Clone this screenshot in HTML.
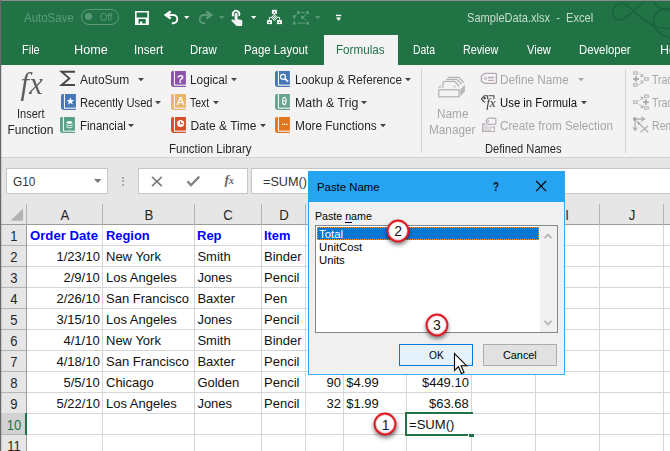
<!DOCTYPE html>
<html><head><meta charset="utf-8"><title>Excel</title>
<style>
html,body{margin:0;padding:0;}
body{width:670px;height:451px;position:relative;overflow:hidden;background:#fff;font-family:"Liberation Sans",sans-serif;}
.b{position:absolute;display:block;}
.g{will-change:opacity}
.t{position:absolute;white-space:pre;line-height:20px;font-family:"Liberation Sans",sans-serif;}
</style></head><body>
<div class="b" style="left:0px;top:0px;width:670px;height:65px;background:#217346;"></div>
<div class="b" style="left:0px;top:65px;width:670px;height:92px;background:#f3f3f3;"></div>
<div class="b" style="left:0px;top:157px;width:670px;height:1px;background:#d2d2d2;"></div>
<div class="b" style="left:0px;top:158px;width:670px;height:67px;background:#e6e6e6;"></div>
<span class="t g" style="top:7.57px;font-size:12.5px;color:#5c9a7a;transform:scaleX(0.9185);transform-origin:0 50%;left:24.20px;">AutoSave</span>
<div class="b" style="left:81px;top:9.200px;width:37.500px;height:15.800px;border:1px solid #5c9a7a;border-radius:8px;box-sizing:border-box"></div>
<div class="b" style="left:85.300px;top:13.300px;width:7px;height:7px;border-radius:4px;background:#58987a"></div>
<span class="t g" style="top:7.42px;font-size:11.5px;color:#5c9a7a;transform:scaleX(0.8125);transform-origin:0 50%;left:100.20px;">Off</span>
<svg class="b" style="left:135.2px;top:11px;" width="14" height="14" viewBox="0 0 14 14"><path fill="#fff" fill-rule="evenodd" d="M0 0h13.900v13.900H0z M1.600 1.500v4.900h10.700V1.500z M3.500 8.100v4.300h1.500v-1.900h2.300v1.900h3.400V8.100z"/></svg>
<svg class="b" style="left:163px;top:10px;" width="15" height="15" viewBox="0 0 15 15"><g ><path d="M.7 5L7 .6 8.400 2.500 4.800 5 8.400 7.500 7 9.400z" fill="#fff"/><path d="M3 5h7.200a4.100 4.100 0 0 1 0 8.200H8.800" fill="none" stroke="#fff" stroke-width="1.900"/></g></svg>
<svg class="b" style="left:199.3px;top:10px;" width="15" height="15" viewBox="0 0 15 15"><g transform="translate(15,0) scale(-1,1)"><path d="M.7 5L7 .6 8.400 2.500 4.800 5 8.400 7.500 7 9.400z" fill="#5c9a7a"/><path d="M3 5h7.200a4.100 4.100 0 0 1 0 8.200H8.800" fill="none" stroke="#5c9a7a" stroke-width="1.900"/></g></svg>
<svg class="b" style="left:182.9px;top:14.850000000000001px;" width="7.4" height="4.9" viewBox="0 0 7.4 4.9"><path d="M1 1h5.4l-2.7 2.9000000000000004z" fill="#fff"/></svg>
<svg class="b" style="left:218.20000000000002px;top:14.850000000000001px;" width="7.4" height="4.9" viewBox="0 0 7.4 4.9"><path d="M1 1h5.4l-2.7 2.9000000000000004z" fill="#5c9a7a"/></svg>
<svg class="b" style="left:230px;top:8px;" width="15" height="19" viewBox="0 0 15 19"><path d="M3.500 8.200A3.300 3.300 0 1 1 8.900 7.800" fill="none" stroke="#fff" stroke-width="1.700"/><path d="M4.600 6.300a1.500 1.500 0 0 1 3 0V11.200l3.300 .6c1 .2 1.600 .9 1.500 1.900l-.4 4.200H6.600L1.600 12.900c-.8-.9 .4-2 1.400-1.300l1.600 1.100z" fill="#f4f4f4"/></svg>
<svg class="b" style="left:249.8px;top:14.95px;" width="7.4" height="4.9" viewBox="0 0 7.4 4.9"><path d="M1 1h5.4l-2.7 2.9000000000000004z" fill="#fff"/></svg>
<svg class="b" style="left:266px;top:9px;" width="17" height="16" viewBox="0 0 17 16"><g fill="none" stroke="#fff" stroke-width=".9"><path d="M3.400 11.200V8.400h10.200v2.800M8.400 4.800v2"/></g><g fill="#fff"><rect x="5.900" y=".8" width="5" height="4.100"/><rect x="1" y="11.100" width="5" height="4"/><rect x="10.900" y="11.100" width="5" height="4"/><path d="M8.400 4.900l3.500 3.500-3.500 3.500-3.500-3.500z"/></g><g fill="#217346"><path d="M7.300 3.700l1.100-1.500 1.100 1.500z"/><path d="M2.400 14l1.100-1.500 1.100 1.500z"/><path d="M12.300 14l1.100-1.500 1.100 1.500z"/><rect x="5.85" y="7.95" width=".9" height=".9"/><rect x="6.90" y="6.90" width=".9" height=".9"/><rect x="6.90" y="9.00" width=".9" height=".9"/><rect x="7.95" y="5.85" width=".9" height=".9"/><rect x="7.95" y="7.95" width=".9" height=".9"/><rect x="7.95" y="10.05" width=".9" height=".9"/><rect x="9.00" y="6.90" width=".9" height=".9"/><rect x="9.00" y="9.00" width=".9" height=".9"/><rect x="10.05" y="7.95" width=".9" height=".9"/></g></svg>
<svg class="b" style="left:292px;top:9px;" width="18" height="17" viewBox="0 0 18 17"><rect x="5.10" y="2.10" width="2.800" height="2.800" fill="#5c9a7a"/><rect x="14.10" y="2.10" width="2.800" height="2.800" fill="#5c9a7a"/><rect x="0.90" y="6.10" width="2.800" height="2.800" fill="#5c9a7a"/><rect x="9.00" y="7.00" width="2.800" height="2.800" fill="#5c9a7a"/><rect x="0.90" y="12.80" width="2.800" height="2.800" fill="#5c9a7a"/><rect x="14.10" y="12.80" width="2.800" height="2.800" fill="#5c9a7a"/><g fill="none" stroke="#5c9a7a" stroke-width="1"><path d="M9.200 3.500h3.600M5.600 4.500L3.200 6.600M2.300 9.800v1.600M5.300 14.200h8M11.500 8l3-3.500M11.500 9l2.600 2.600"/></g></svg>
<svg class="b" style="left:313.8px;top:14.850000000000001px;" width="7.4" height="4.9" viewBox="0 0 7.4 4.9"><path d="M1 1h5.4l-2.7 2.9000000000000004z" fill="#5c9a7a"/></svg>
<svg class="b" style="left:335px;top:13px;" width="8" height="10" viewBox="0 0 8 10"><rect x="1" y="1.700" width="5.200" height="1.400" fill="#fff"/><path d="M1 4.400h5.200l-2.600 3.600z" fill="#fff"/></svg>
<span class="t g" style="top:8.17px;font-size:12.5px;color:#c9ddd1;transform:scaleX(0.8860);transform-origin:0 50%;left:467.10px;">SampleData.xlsx  -  Excel</span>
<svg class="b" style="left:600px;top:0px;" width="70" height="65" viewBox="0 0 70 65"><g fill="none" stroke="#1a623a" stroke-width="1.500"><path d="M44.500 1C38 6 30 16 22 19.500C16 21 12 16 13 11C14 5 19 2.500 23 3.500C30 5.500 36 14 45 20.500C52 26 60 29 70 28.500"/><path d="M70 8.500C62 8 54 12 53.500 20C53 28 60 35 70 38.500"/><path d="M54 0C54 5 60 10 70 10.500"/></g></svg>
<div class="b" style="left:324px;top:35px;width:74px;height:30px;background:#f3f3f3;"></div>
<span class="t g" style="top:40.07px;font-size:12.5px;color:#ffffff;transform:scaleX(0.8800);transform-origin:0 50%;left:21.50px;">File</span>
<span class="t g" style="top:40.07px;font-size:12.5px;color:#ffffff;transform:scaleX(1.0121);transform-origin:0 50%;left:73.60px;">Home</span>
<span class="t g" style="top:40.07px;font-size:12.5px;color:#ffffff;transform:scaleX(0.9313);transform-origin:0 50%;left:133.60px;">Insert</span>
<span class="t g" style="top:40.07px;font-size:12.5px;color:#ffffff;transform:scaleX(0.9133);transform-origin:0 50%;left:190.10px;">Draw</span>
<span class="t g" style="top:40.07px;font-size:12.5px;color:#ffffff;transform:scaleX(0.9113);transform-origin:0 50%;left:244.30px;">Page Layout</span>
<span class="t g" style="top:40.07px;font-size:12.5px;color:#217346;transform:scaleX(0.9321);transform-origin:0 50%;left:335.90px;">Formulas</span>
<span class="t g" style="top:40.07px;font-size:12.5px;color:#ffffff;transform:scaleX(0.8296);transform-origin:0 50%;left:412.90px;">Data</span>
<span class="t g" style="top:40.07px;font-size:12.5px;color:#ffffff;transform:scaleX(0.8595);transform-origin:0 50%;left:463.40px;">Review</span>
<span class="t g" style="top:40.07px;font-size:12.5px;color:#ffffff;transform:scaleX(0.8857);transform-origin:0 50%;left:527.20px;">View</span>
<span class="t g" style="top:40.07px;font-size:12.5px;color:#ffffff;transform:scaleX(0.9052);transform-origin:0 50%;left:579.40px;">Developer</span>
<span class="t g" style="top:40.07px;font-size:12.5px;color:#ffffff;left:660.00px;">Help</span>
<span class="t g" style="left:20.500px;top:64.300px;font-family:'Liberation Serif',serif;font-style:italic;font-size:30.500px;line-height:40px;color:#5e5e5e;letter-spacing:.4px">fx</span>
<span class="t g" style="top:103.84px;font-size:12px;color:#262626;transform:scaleX(0.9161);transform-origin:0 50%;left:16.70px;">Insert</span>
<span class="t g" style="top:120.04px;font-size:12px;color:#262626;left:7.40px;">Function</span>
<svg class="b" style="left:59px;top:70px;" width="18" height="17" viewBox="0 0 18 17"><path d="M16 1.750H2.600L10.300 8.400 2.600 15.050H16" fill="none" stroke="#464646" stroke-width="1.900" stroke-linejoin="miter"/></svg>
<span class="t g" style="top:69.74px;font-size:12px;color:#262626;transform:scaleX(0.9959);transform-origin:0 50%;left:79.60px;">AutoSum</span>
<svg class="b" style="left:137.4px;top:77.0px;" width="8" height="5" viewBox="0 0 8 5"><path d="M1 1h6L4 4.200z" fill="#444"/></svg>
<svg class="b" style="left:61.2px;top:94px;" width="15" height="16" viewBox="0 0 15 16"><path d="M2.900 0H1.600Q0 0 0 1.600V13.600Q0 15.900 2.400 15.900H14.900V14.800H2.900z" fill="#4577b9"/><rect x="4" y="0" width="10.900" height="13.600" fill="#4577b9"/><path d="M9.40 3.20L10.40 5.92L13.30 6.03L11.02 7.83L11.81 10.62L9.40 9.00L6.99 10.62L7.78 7.83L5.50 6.03L8.40 5.92z" fill="#fff"/></svg>
<span class="t g" style="top:92.94px;font-size:12px;color:#262626;transform:scaleX(0.9295);transform-origin:0 50%;left:79.60px;">Recently Used</span>
<svg class="b" style="left:153.8px;top:100.0px;" width="8" height="5" viewBox="0 0 8 5"><path d="M1 1h6L4 4.200z" fill="#444"/></svg>
<svg class="b" style="left:60.1px;top:116.8px;" width="15" height="16" viewBox="0 0 15 16"><path d="M2.900 0H1.600Q0 0 0 1.600V13.600Q0 15.900 2.400 15.900H14.900V14.800H2.900z" fill="#5a9f88"/><rect x="4" y="0" width="10.900" height="13.600" fill="#5a9f88"/><ellipse cx="9.400" cy="5.600" rx="3" ry="1.250" fill="#fff"/><g fill="none" stroke="#fff" stroke-width="1"><path d="M6.400 7.400c0 1.700 6 1.700 6 0M6.400 9.500c0 1.700 6 1.700 6 0M6.400 11.600c0 .4"/></g></svg>
<span class="t g" style="top:116.04px;font-size:12px;color:#262626;transform:scaleX(0.9542);transform-origin:0 50%;left:79.60px;">Financial</span>
<svg class="b" style="left:127px;top:123.0px;" width="8" height="5" viewBox="0 0 8 5"><path d="M1 1h6L4 4.200z" fill="#444"/></svg>
<svg class="b g" style="left:171px;top:71px;" width="15" height="16" viewBox="0 0 15 16"><path d="M2.900 0H1.600Q0 0 0 1.600V13.600Q0 15.900 2.400 15.900H14.900V14.800H2.900z" fill="#8a55a8"/><rect x="4" y="0" width="10.900" height="13.600" fill="#8a55a8"/><text x="9.500" y="11.900" font-family="Liberation Sans" font-weight="bold" font-size="11.500" fill="#fff" text-anchor="middle">?</text></svg>
<span class="t g" style="top:69.74px;font-size:12px;color:#262626;transform:scaleX(0.9842);transform-origin:0 50%;left:190.40px;">Logical</span>
<svg class="b" style="left:229.9px;top:77.0px;" width="8" height="5" viewBox="0 0 8 5"><path d="M1 1h6L4 4.200z" fill="#444"/></svg>
<svg class="b g" style="left:171px;top:94px;" width="15" height="16" viewBox="0 0 15 16"><path d="M2.900 0H1.600Q0 0 0 1.600V13.600Q0 15.900 2.400 15.900H14.900V14.800H2.900z" fill="#e8b56e"/><rect x="4" y="0" width="10.900" height="13.600" fill="#e8b56e"/><text x="9.500" y="11" font-family="Liberation Sans" font-size="11.500" fill="#fff" text-anchor="middle">A</text></svg>
<span class="t g" style="top:92.94px;font-size:12px;color:#262626;transform:scaleX(0.8652);transform-origin:0 50%;left:190.40px;">Text</span>
<svg class="b" style="left:212.4px;top:100.0px;" width="8" height="5" viewBox="0 0 8 5"><path d="M1 1h6L4 4.200z" fill="#444"/></svg>
<svg class="b" style="left:171px;top:116.8px;" width="15" height="16" viewBox="0 0 15 16"><path d="M2.900 0H1.600Q0 0 0 1.600V13.600Q0 15.900 2.400 15.900H14.900V14.800H2.900z" fill="#d4502c"/><rect x="4" y="0" width="10.900" height="13.600" fill="#d4502c"/><circle cx="9.600" cy="6.400" r="3.500" fill="#fff"/><path d="M9.600 4.300V6.600h2.100" fill="none" stroke="#d4502c" stroke-width="1.100"/></svg>
<span class="t g" style="top:116.04px;font-size:12px;color:#262626;left:190.40px;">Date &amp; Time</span>
<svg class="b" style="left:258.7px;top:123.0px;" width="8" height="5" viewBox="0 0 8 5"><path d="M1 1h6L4 4.200z" fill="#444"/></svg>
<svg class="b" style="left:275.1px;top:71px;" width="15" height="16" viewBox="0 0 15 16"><path d="M2.900 0H1.600Q0 0 0 1.600V13.600Q0 15.900 2.400 15.900H14.900V14.800H2.900z" fill="#4577b9"/><rect x="4" y="0" width="10.900" height="13.600" fill="#4577b9"/><circle cx="8" cy="5.800" r="2.500" fill="none" stroke="#fff" stroke-width="1.300"/><path d="M9.800 7.700l3.400 3" stroke="#fff" stroke-width="1.700"/></svg>
<span class="t g" style="top:69.74px;font-size:12px;color:#262626;transform:scaleX(0.9782);transform-origin:0 50%;left:294.80px;">Lookup &amp; Reference</span>
<svg class="b" style="left:403.7px;top:77.0px;" width="8" height="5" viewBox="0 0 8 5"><path d="M1 1h6L4 4.200z" fill="#444"/></svg>
<svg class="b" style="left:275.1px;top:94px;" width="15" height="16" viewBox="0 0 15 16"><path d="M2.900 0H1.600Q0 0 0 1.600V13.600Q0 15.900 2.400 15.900H14.900V14.800H2.900z" fill="#6aa490"/><rect x="4" y="0" width="10.900" height="13.600" fill="#6aa490"/><ellipse cx="9.300" cy="6.900" rx="1.750" ry="3.700" fill="none" stroke="#fff" stroke-width="1.100"/><path d="M7.600 6.900h3.400" stroke="#fff" stroke-width="1"/></svg>
<span class="t g" style="top:92.94px;font-size:12px;color:#262626;transform:scaleX(1.0311);transform-origin:0 50%;left:294.80px;">Math &amp; Trig</span>
<svg class="b" style="left:359.8px;top:100.0px;" width="8" height="5" viewBox="0 0 8 5"><path d="M1 1h6L4 4.200z" fill="#444"/></svg>
<svg class="b" style="left:275.1px;top:116.8px;" width="15" height="16" viewBox="0 0 15 16"><path d="M2.900 0H1.600Q0 0 0 1.600V13.600Q0 15.900 2.400 15.900H14.900V14.800H2.900z" fill="#e2761f"/><rect x="4" y="0" width="10.900" height="13.600" fill="#e2761f"/><g fill="#fff"><rect x="7" y="6.700" width="1.300" height="1.300"/><rect x="9.100" y="6.700" width="1.300" height="1.300"/><rect x="11.200" y="6.700" width="1.300" height="1.300"/></g></svg>
<span class="t g" style="top:116.04px;font-size:12px;color:#262626;transform:scaleX(0.9880);transform-origin:0 50%;left:294.80px;">More Functions</span>
<svg class="b" style="left:378.9px;top:123.0px;" width="8" height="5" viewBox="0 0 8 5"><path d="M1 1h6L4 4.200z" fill="#444"/></svg>
<span class="t g" style="top:139.14px;font-size:12px;color:#262626;transform:scaleX(0.9593);transform-origin:0 50%;left:169.30px;">Function Library</span>
<div class="b" style="left:421px;top:69px;width:1px;height:84px;background:#d2d2d2;"></div>
<div class="b" style="left:625px;top:69px;width:1px;height:84px;background:#d2d2d2;"></div>
<svg class="b" style="left:436px;top:75px;" width="31" height="24" viewBox="0 0 31 24"><g fill="none" stroke="#b3b3b3" stroke-width="1.250"><rect x="2.800" y="14.800" width="20.200" height="7" fill="#f6f3f6"/><path d="M6.900 12.900V8.400Q6.900 6.300 9.200 6.300H18.800L23.300 11.500" fill="#f6f3f6"/><path d="M10.200 4.300H20.700L25.500 9.300M11.800 2.300H22.800L27.600 7.500"/><path d="M17.600 11.500l1-1 1 1-1 1z" stroke-width=".8"/></g><path d="M24.300 14.600L28.900 9.600V16.400L24.300 21.400z" fill="#b9b9b9"/><path d="M2.200 12.800L4.700 10.300V12.800z" fill="#b3b3b3"/></svg>
<span class="t g" style="top:104.04px;font-size:12px;color:#a6a6a6;transform:scaleX(0.9844);transform-origin:0 50%;left:436.50px;">Name</span>
<span class="t g" style="top:120.04px;font-size:12px;color:#a6a6a6;transform:scaleX(0.9809);transform-origin:0 50%;left:428.90px;">Manager</span>
<svg class="b" style="left:480px;top:72px;" width="18" height="13" viewBox="0 0 18 13"><g fill="none" stroke="#afa9af" stroke-width="1.300"><path d="M4.700 1.300H15.600Q16.400 1.300 16.400 2.100V10.500Q16.400 11.300 15.600 11.300H4.700L1.400 9.200V4.200z" fill="#f7f3f7"/><circle cx="5.400" cy="6.400" r="1.150" stroke-width="1"/><path d="M8.100 5.500h5.800M8.100 8.400h5.800"/></g></svg>
<span class="t g" style="top:69.74px;font-size:12px;color:#a6a6a6;transform:scaleX(0.9814);transform-origin:0 50%;left:500.40px;">Define Name</span>
<svg class="b" style="left:577.1px;top:77.0px;" width="8" height="5" viewBox="0 0 8 5"><path d="M1 1h6L4 4.200z" fill="#a6a6a6"/></svg>
<svg class="b g" style="left:480px;top:94px;" width="19" height="18" viewBox="0 0 19 18"><g fill="none" stroke="#4a4a4a" stroke-width="1.100"><path d="M7.600 5.200V1.800H4.300L1.700 4.500V5.500L4.200 8H5.400"/><path d="M8.600 1.800H13.900V5"/><circle cx="4.600" cy="4.300" r=".7"/></g><text x="6.300" y="13.400" font-family="Liberation Serif" font-style="italic" font-size="13.500" fill="#3c3c3c" letter-spacing="-.2">fx</text></svg>
<span class="t g" style="top:92.94px;font-size:12px;color:#111;transform:scaleX(0.9463);transform-origin:0 50%;left:500.40px;">Use in Formula</span>
<svg class="b" style="left:580.2px;top:100.0px;" width="8" height="5" viewBox="0 0 8 5"><path d="M1 1h6L4 4.200z" fill="#444"/></svg>
<svg class="b" style="left:480px;top:117px;" width="18" height="17" viewBox="0 0 18 17"><rect x="2.700" y="6.900" width="11.500" height="7.400" fill="#e6e0e6" stroke="#b4aeb4" stroke-width="1.300"/><rect x="10.700" y="11" width="3" height="2.800" fill="#fbf9fb"/><path d="M2.700 10.600h11.500M6.500 7v7.300M10.500 7v7.300" stroke="#d3ccd3" stroke-width=".8" fill="none"/><path d="M8.600 1.100H14.600Q15.900 1.100 15.900 2.400V6.100Q15.900 7.400 14.600 7.400H8.600L6.400 5.200V3.300z" fill="#f6f2f6" stroke="#f3f3f3" stroke-width="3"/><path d="M8.600 1.100H14.600Q15.900 1.100 15.900 2.400V6.100Q15.900 7.400 14.600 7.400H8.600L6.400 5.200V3.300z" fill="#f6f2f6" stroke="#b4aeb4" stroke-width="1.200"/><circle cx="8.300" cy="4.200" r=".7" fill="none" stroke="#b4aeb4" stroke-width=".8"/></svg>
<span class="t g" style="top:116.04px;font-size:12px;color:#a6a6a6;transform:scaleX(0.9733);transform-origin:0 50%;left:500.40px;">Create from Selection</span>
<span class="t g" style="top:139.14px;font-size:12px;color:#262626;transform:scaleX(0.9253);transform-origin:0 50%;left:484.50px;">Defined Names</span>
<svg class="b" style="left:630px;top:68px;" width="24" height="44" viewBox="0 0 24 44"><g fill="none" stroke="#b0b0b0" stroke-width="1"><rect x="3.60" y="3.90" width="3.70" height="2.30"/><rect x="3.60" y="15.80" width="3.70" height="2.30"/><rect x="14.60" y="9.80" width="3.70" height="2.40"/><rect x="3.60" y="32.90" width="3.70" height="2.40"/><rect x="14.60" y="27.00" width="3.70" height="2.30"/><rect x="14.60" y="38.80" width="3.70" height="2.40"/><path d="M9.30 5.20L12.90 8.40M12.90 8.40L12.79 5.80M12.90 8.40L10.31 8.59"/><path d="M9.30 16.80L12.90 13.20M12.90 13.20L10.30 13.16M12.90 13.20L12.94 15.80"/><path d="M9.30 32.90L12.90 29.30M12.90 29.30L10.30 29.26M12.90 29.30L12.94 31.90"/><path d="M9.30 36.00L12.90 39.60M12.90 39.60L12.94 37.00M12.90 39.60L10.30 39.64"/></g><g fill="#a9a9a9"><rect x="3.1000000000000227" y="10" width="5.700" height="1.900"/><rect x="5" y="8.299999999999997" width="1.900" height="5.400"/><rect x="13.100000000000023" y="33.2" width="5.700" height="1.900"/><rect x="15" y="31.400000000000006" width="1.900" height="5.400"/></g></svg>
<svg class="b" style="left:632px;top:116px;" width="19" height="18" viewBox="0 0 19 18"><g fill="none" stroke="#b0b0b0" stroke-width="1.250"><path d="M3.100 3.500V14.200M1.100 11.300l2 3 2.200-3M3.500 3.100h8.700M9.300 1.100l3.300 2-3.300 2.100"/><path d="M4.700 5.200L16.200 16.200M16.200 9.800L8.400 16.200" stroke-width="1.200"/></g><path d="M5 5.500l3.800 1.200-2.500 2.500z" fill="#adadad"/><circle cx="2.900" cy="2.900" r="2" fill="#a9a9a9"/></svg>
<span class="t g" style="top:69.74px;font-size:12px;color:#a6a6a6;transform:scaleX(0.8750);transform-origin:0 50%;left:652.40px;">Trac</span>
<span class="t g" style="top:92.94px;font-size:12px;color:#a6a6a6;transform:scaleX(0.8750);transform-origin:0 50%;left:652.40px;">Trac</span>
<span class="t g" style="top:116.04px;font-size:12px;color:#a6a6a6;transform:scaleX(0.8800);transform-origin:0 50%;left:652.40px;">Rem</span>
<div class="b" style="left:6px;top:168px;width:102px;height:26px;background:#fff;border:1px solid #c6c6c6;box-sizing:border-box;"></div>
<span class="t" style="top:171.80px;font-size:13px;color:#333;transform:scaleX(0.9120);transform-origin:0 50%;left:13.20px;">G10</span>
<svg class="b" style="left:93px;top:177.5px;" width="10" height="6" viewBox="0 0 10 6"><path d="M1 1h7.500L4.750 5z" fill="#777"/></svg>
<div class="b" style="left:122px;top:176.5px;width:2px;height:2px;background:#ababab;"></div>
<div class="b" style="left:122px;top:180px;width:2px;height:2px;background:#ababab;"></div>
<div class="b" style="left:122px;top:183.5px;width:2px;height:2px;background:#ababab;"></div>
<div class="b" style="left:138px;top:168px;width:110px;height:26px;background:#fff;border:1px solid #c6c6c6;box-sizing:border-box;"></div>
<svg class="b" style="left:151px;top:175.5px;" width="12" height="11" viewBox="0 0 12 11"><path d="M1 .9l9.800 9.200M10.800 .9L1 10.100" stroke="#777" stroke-width="1.500"/></svg>
<svg class="b" style="left:186px;top:175px;" width="15" height="13" viewBox="0 0 15 13"><path d="M1.600 6.300l3.300 4L13.300 1.600" fill="none" stroke="#858585" stroke-width="2.300"/></svg>
<span class="t" style="left:224.500px;top:170px;font-family:'Liberation Serif',serif;font-style:italic;font-weight:bold;font-size:13.500px;color:#686868;">f<span style="font-size:10.500px;margin-left:-.3px;position:relative;top:-.3px">x</span></span>
<div class="b" style="left:251px;top:168px;width:421px;height:26px;background:#fff;border:1px solid #c6c6c6;box-sizing:border-box;"></div>
<span class="t" style="top:172.12px;font-size:13.5px;color:#333;transform:scaleX(0.9362);transform-origin:0 50%;left:263.00px;">=SUM()</span>
<div class="b" style="left:27px;top:225px;width:643px;height:226px;background:#fff;"></div>
<div class="b" style="left:0px;top:225px;width:26px;height:226px;background:#e6e6e6;"></div>
<div class="b" style="left:0px;top:224px;width:670px;height:1px;background:#9b9b9b;"></div>
<div class="b" style="left:26px;top:204px;width:1px;height:21px;background:#b4b4b4;"></div>
<div class="b" style="left:26px;top:225px;width:1px;height:226px;background:#d6d6d6;"></div>
<div class="b" style="left:102px;top:204px;width:1px;height:21px;background:#b4b4b4;"></div>
<div class="b" style="left:102px;top:225px;width:1px;height:226px;background:#d6d6d6;"></div>
<div class="b" style="left:194px;top:204px;width:1px;height:21px;background:#b4b4b4;"></div>
<div class="b" style="left:194px;top:225px;width:1px;height:226px;background:#d6d6d6;"></div>
<div class="b" style="left:261px;top:204px;width:1px;height:21px;background:#b4b4b4;"></div>
<div class="b" style="left:261px;top:225px;width:1px;height:226px;background:#d6d6d6;"></div>
<div class="b" style="left:305px;top:204px;width:1px;height:21px;background:#b4b4b4;"></div>
<div class="b" style="left:305px;top:225px;width:1px;height:226px;background:#d6d6d6;"></div>
<div class="b" style="left:343px;top:204px;width:1px;height:21px;background:#b4b4b4;"></div>
<div class="b" style="left:343px;top:225px;width:1px;height:226px;background:#d6d6d6;"></div>
<div class="b" style="left:406px;top:204px;width:1px;height:21px;background:#b4b4b4;"></div>
<div class="b" style="left:406px;top:225px;width:1px;height:226px;background:#d6d6d6;"></div>
<div class="b" style="left:471px;top:204px;width:1px;height:21px;background:#b4b4b4;"></div>
<div class="b" style="left:471px;top:225px;width:1px;height:226px;background:#d6d6d6;"></div>
<div class="b" style="left:535px;top:204px;width:1px;height:21px;background:#b4b4b4;"></div>
<div class="b" style="left:535px;top:225px;width:1px;height:226px;background:#d6d6d6;"></div>
<div class="b" style="left:599px;top:204px;width:1px;height:21px;background:#b4b4b4;"></div>
<div class="b" style="left:599px;top:225px;width:1px;height:226px;background:#d6d6d6;"></div>
<div class="b" style="left:663px;top:204px;width:1px;height:21px;background:#b4b4b4;"></div>
<div class="b" style="left:663px;top:225px;width:1px;height:226px;background:#d6d6d6;"></div>
<div class="b" style="left:26px;top:225px;width:1px;height:226px;background:#9b9b9b;"></div>
<div class="b" style="left:27px;top:245px;width:643px;height:1px;background:#d6d6d6;"></div>
<div class="b" style="left:0px;top:245px;width:26px;height:1px;background:#b4b4b4;"></div>
<div class="b" style="left:27px;top:266px;width:643px;height:1px;background:#d6d6d6;"></div>
<div class="b" style="left:0px;top:266px;width:26px;height:1px;background:#b4b4b4;"></div>
<div class="b" style="left:27px;top:287px;width:643px;height:1px;background:#d6d6d6;"></div>
<div class="b" style="left:0px;top:287px;width:26px;height:1px;background:#b4b4b4;"></div>
<div class="b" style="left:27px;top:308px;width:643px;height:1px;background:#d6d6d6;"></div>
<div class="b" style="left:0px;top:308px;width:26px;height:1px;background:#b4b4b4;"></div>
<div class="b" style="left:27px;top:329px;width:643px;height:1px;background:#d6d6d6;"></div>
<div class="b" style="left:0px;top:329px;width:26px;height:1px;background:#b4b4b4;"></div>
<div class="b" style="left:27px;top:350px;width:643px;height:1px;background:#d6d6d6;"></div>
<div class="b" style="left:0px;top:350px;width:26px;height:1px;background:#b4b4b4;"></div>
<div class="b" style="left:27px;top:371px;width:643px;height:1px;background:#d6d6d6;"></div>
<div class="b" style="left:0px;top:371px;width:26px;height:1px;background:#b4b4b4;"></div>
<div class="b" style="left:27px;top:392px;width:643px;height:1px;background:#d6d6d6;"></div>
<div class="b" style="left:0px;top:392px;width:26px;height:1px;background:#b4b4b4;"></div>
<div class="b" style="left:27px;top:413px;width:643px;height:1px;background:#d6d6d6;"></div>
<div class="b" style="left:0px;top:413px;width:26px;height:1px;background:#b4b4b4;"></div>
<div class="b" style="left:27px;top:434px;width:643px;height:1px;background:#d6d6d6;"></div>
<div class="b" style="left:0px;top:434px;width:26px;height:1px;background:#b4b4b4;"></div>
<svg class="b" style="left:10px;top:207px;" width="14" height="15" viewBox="0 0 14 15"><path d="M13 1.500V13.800H.7z" fill="#b2b2b2"/></svg>
<span class="t" style="top:204.70px;font-size:15px;color:#262626;left:-35.50px;width:200px;text-align:center;transform:scaleX(.88);">A</span>
<span class="t" style="top:204.70px;font-size:15px;color:#262626;left:48.50px;width:200px;text-align:center;transform:scaleX(.88);">B</span>
<span class="t" style="top:204.70px;font-size:15px;color:#262626;left:128.00px;width:200px;text-align:center;transform:scaleX(.88);">C</span>
<span class="t" style="top:204.70px;font-size:15px;color:#262626;left:183.50px;width:200px;text-align:center;transform:scaleX(.88);">D</span>
<span class="t" style="top:204.70px;font-size:15px;color:#262626;left:466.90px;width:200px;text-align:center;transform:scaleX(.88);">I</span>
<span class="t" style="top:204.70px;font-size:15px;color:#262626;left:531.50px;width:200px;text-align:center;transform:scaleX(.88);">J</span>
<div class="b" style="left:0px;top:413px;width:26px;height:21px;background:#d2d2d2;"></div>
<div class="b" style="left:25px;top:413px;width:2px;height:22px;background:#217346;"></div>
<span class="t" style="top:225.70px;font-size:15px;color:#262626;left:-86.40px;width:200px;text-align:center;transform:scaleX(.87);">1</span>
<span class="t" style="top:246.70px;font-size:15px;color:#262626;left:-86.40px;width:200px;text-align:center;transform:scaleX(.87);">2</span>
<span class="t" style="top:267.70px;font-size:15px;color:#262626;left:-86.40px;width:200px;text-align:center;transform:scaleX(.87);">3</span>
<span class="t" style="top:288.70px;font-size:15px;color:#262626;left:-86.40px;width:200px;text-align:center;transform:scaleX(.87);">4</span>
<span class="t" style="top:309.70px;font-size:15px;color:#262626;left:-86.40px;width:200px;text-align:center;transform:scaleX(.87);">5</span>
<span class="t" style="top:330.70px;font-size:15px;color:#262626;left:-86.40px;width:200px;text-align:center;transform:scaleX(.87);">6</span>
<span class="t" style="top:351.70px;font-size:15px;color:#262626;left:-86.40px;width:200px;text-align:center;transform:scaleX(.87);">7</span>
<span class="t" style="top:372.70px;font-size:15px;color:#262626;left:-86.40px;width:200px;text-align:center;transform:scaleX(.87);">8</span>
<span class="t" style="top:393.70px;font-size:15px;color:#262626;left:-86.40px;width:200px;text-align:center;transform:scaleX(.87);">9</span>
<span class="t" style="top:414.70px;font-size:15px;color:#217346;left:-85.70px;width:200px;text-align:center;transform:scaleX(.87);">10</span>
<span class="t" style="top:435.70px;font-size:15px;color:#262626;left:-85.70px;width:200px;text-align:center;transform:scaleX(.87);">11</span>
<span class="t" style="top:225.70px;font-size:13px;color:#0000ff;font-weight:bold;transform:scaleX(1.0119);transform-origin:0 50%;left:30.40px;">Order Date</span>
<span class="t" style="top:225.70px;font-size:13px;color:#0000ff;font-weight:bold;transform:scaleX(0.9909);transform-origin:0 50%;left:105.50px;">Region</span>
<span class="t" style="top:225.70px;font-size:13px;color:#0000ff;font-weight:bold;left:197.00px;">Rep</span>
<span class="t" style="top:225.70px;font-size:13px;color:#0000ff;font-weight:bold;transform:scaleX(0.9852);transform-origin:0 50%;left:263.60px;">Item</span>
<span class="t" style="top:246.70px;font-size:13px;color:#111;right:570.11px;">1/23/10</span>
<span class="t" style="top:246.70px;font-size:13px;color:#111;left:106.00px;">New York</span>
<span class="t" style="top:246.70px;font-size:13px;color:#111;left:197.40px;">Smith</span>
<span class="t" style="top:246.70px;font-size:13px;color:#111;left:264.00px;">Binder</span>
<span class="t" style="top:267.70px;font-size:13px;color:#111;right:570.34px;">2/9/10</span>
<span class="t" style="top:267.70px;font-size:13px;color:#111;left:106.00px;">Los Angeles</span>
<span class="t" style="top:267.70px;font-size:13px;color:#111;left:197.40px;">Jones</span>
<span class="t" style="top:267.70px;font-size:13px;color:#111;left:264.00px;">Pencil</span>
<span class="t" style="top:288.70px;font-size:13px;color:#111;right:570.11px;">2/26/10</span>
<span class="t" style="top:288.70px;font-size:13px;color:#111;left:106.00px;">San Francisco</span>
<span class="t" style="top:288.70px;font-size:13px;color:#111;left:197.40px;">Baxter</span>
<span class="t" style="top:288.70px;font-size:13px;color:#111;left:264.00px;">Pen</span>
<span class="t" style="top:309.70px;font-size:13px;color:#111;right:570.11px;">3/15/10</span>
<span class="t" style="top:309.70px;font-size:13px;color:#111;left:106.00px;">Los Angeles</span>
<span class="t" style="top:309.70px;font-size:13px;color:#111;left:197.40px;">Jones</span>
<span class="t" style="top:309.70px;font-size:13px;color:#111;left:264.00px;">Pencil</span>
<span class="t" style="top:330.70px;font-size:13px;color:#111;right:570.34px;">4/1/10</span>
<span class="t" style="top:330.70px;font-size:13px;color:#111;left:106.00px;">New York</span>
<span class="t" style="top:330.70px;font-size:13px;color:#111;left:197.40px;">Smith</span>
<span class="t" style="top:330.70px;font-size:13px;color:#111;left:264.00px;">Binder</span>
<span class="t" style="top:351.70px;font-size:13px;color:#111;right:570.11px;">4/18/10</span>
<span class="t" style="top:351.70px;font-size:13px;color:#111;left:106.00px;">San Francisco</span>
<span class="t" style="top:351.70px;font-size:13px;color:#111;left:197.40px;">Baxter</span>
<span class="t" style="top:351.70px;font-size:13px;color:#111;left:264.00px;">Pencil</span>
<span class="t" style="top:372.70px;font-size:13px;color:#111;right:570.34px;">5/5/10</span>
<span class="t" style="top:372.70px;font-size:13px;color:#111;left:106.00px;">Chicago</span>
<span class="t" style="top:372.70px;font-size:13px;color:#111;left:197.40px;">Golden</span>
<span class="t" style="top:372.70px;font-size:13px;color:#111;left:264.00px;">Pencil</span>
<span class="t" style="top:393.70px;font-size:13px;color:#111;right:570.11px;">5/22/10</span>
<span class="t" style="top:393.70px;font-size:13px;color:#111;left:106.00px;">Los Angeles</span>
<span class="t" style="top:393.70px;font-size:13px;color:#111;left:197.40px;">Jones</span>
<span class="t" style="top:393.70px;font-size:13px;color:#111;left:264.00px;">Pencil</span>
<span class="t" style="top:372.70px;font-size:13px;color:#111;right:329.03px;">90</span>
<span class="t" style="top:372.70px;font-size:13px;color:#111;left:346.20px;">$4.99</span>
<span class="t" style="top:372.70px;font-size:13px;color:#111;right:201.08px;">$449.10</span>
<span class="t" style="top:393.70px;font-size:13px;color:#111;right:329.03px;">32</span>
<span class="t" style="top:393.70px;font-size:13px;color:#111;left:346.20px;">$1.99</span>
<span class="t" style="top:393.70px;font-size:13px;color:#111;right:201.32px;">$63.68</span>
<span class="t" style="top:414.70px;font-size:13px;color:#111;transform:scaleX(1.0044);transform-origin:0 50%;left:409.40px;">=SUM()</span>
<div class="b" style="left:471px;top:414px;width:1px;height:20px;background:#fff;"></div>
<div class="b" style="left:405px;top:412px;width:68px;height:2px;background:#217346;"></div>
<div class="b" style="left:405px;top:412px;width:2px;height:24px;background:#217346;"></div>
<div class="b" style="left:405px;top:434px;width:62.7px;height:2px;background:#217346;"></div>
<div class="b" style="left:469px;top:434px;width:5px;height:2.8px;background:#217346;"></div>
<div class="b" style="left:308px;top:171px;width:257px;height:203.5px;background:#f0f0f0;"></div>
<div class="b" style="left:308px;top:171px;width:257px;height:31px;background:#27a4f1;"></div>
<div class="b" style="left:308px;top:171px;width:1px;height:203px;background:#27a4f1;"></div>
<div class="b" style="left:564px;top:171px;width:1px;height:203px;background:#38a8f0;"></div>
<div class="b" style="left:308px;top:373.5px;width:257px;height:1px;background:#3fabf0;"></div>
<span class="t" style="top:177.35px;font-size:11.7px;color:#000;transform:scaleX(0.9738);transform-origin:0 50%;left:317.10px;">Paste Name</span>
<span class="t" style="top:176.52px;font-size:13.5px;color:#111;font-weight:bold;transform:scaleX(0.7250);transform-origin:0 50%;left:493.30px;">?</span>
<svg class="b" style="left:535px;top:180px;" width="12" height="12" viewBox="0 0 12 12"><path d="M1.100 1l10 10.200M11.100 1L1.100 11.200" stroke="#000" stroke-width="1.150"/></svg>
<span class="t" style="top:206.25px;font-size:11.7px;color:#000;transform:scaleX(0.9111);transform-origin:0 50%;left:314.90px;">Paste name</span>
<div class="b" style="left:345.3px;top:221.5px;width:6.6px;height:1px;background:#000;"></div>
<div class="b" style="left:315px;top:225px;width:243px;height:107.5px;background:#fff;border:1px solid #828790;box-sizing:border-box;"></div>
<div class="b" style="left:540px;top:226px;width:17px;height:105.5px;background:#f0f0f0;"></div>
<svg class="b" style="left:542.5px;top:232px;" width="10" height="8" viewBox="0 0 10 8"><path d="M1.600 6.100l3.500-3.500 3.500 3.500" fill="none" stroke="#b6b6b6" stroke-width="1.900"/></svg>
<svg class="b" style="left:542.5px;top:318.5px;" width="10" height="8" viewBox="0 0 10 8"><path d="M1.600 1.900l3.500 3.500 3.500-3.500" fill="none" stroke="#b6b6b6" stroke-width="1.900"/></svg>
<div class="b" style="left:317px;top:227px;width:222px;height:13px;background:#0078d7;border:1px dotted #f0a04a;box-sizing:border-box;"></div>
<span class="t" style="top:223.65px;font-size:11.7px;color:#fff;transform:scaleX(0.9720);transform-origin:0 50%;left:319.40px;">Total</span>
<span class="t" style="top:236.75px;font-size:11.7px;color:#000;transform:scaleX(0.9630);transform-origin:0 50%;left:319.40px;">UnitCost</span>
<span class="t" style="top:249.75px;font-size:11.7px;color:#000;transform:scaleX(0.9667);transform-origin:0 50%;left:319.40px;">Units</span>
<div class="b" style="left:399px;top:344px;width:74px;height:22px;background:#e5f1fb;border:1px solid #0078d7;box-sizing:border-box;"></div>
<span class="t" style="top:345.25px;font-size:11.7px;color:#000;transform:scaleX(0.8765);transform-origin:0 50%;left:428.70px;">OK</span>
<div class="b" style="left:483px;top:344px;width:74px;height:22px;background:#e1e1e1;border:1px solid #adadad;box-sizing:border-box;"></div>
<span class="t" style="top:345.25px;font-size:11.7px;color:#000;transform:scaleX(0.9278);transform-origin:0 50%;left:503.30px;">Cancel</span>
<svg width="0" height="0" style="position:absolute"><defs><radialGradient id="cg" cx="50%" cy="42%" r="55%"><stop offset="0" stop-color="#fff"/><stop offset=".7" stop-color="#fff"/><stop offset="1" stop-color="#f3d9d9"/></radialGradient></defs></svg>
<div class="b" style="left:375.2px;top:414.1px;width:20.4px;height:20.4px;border-radius:50%;box-shadow:0 2.500px 4px 1.200px rgba(0,0,0,.52)"></div>
<svg class="b" style="left:373.4px;top:412.3px;" width="24" height="24" viewBox="0 0 24 24"><circle cx="12" cy="12" r="10.350" fill="url(#cg)" stroke="#e0161e" stroke-width="2.100"/><circle cx="12" cy="12" r="9.400" fill="none" stroke="#f08a8e" stroke-width=".6"/></svg>
<span class="t" style="top:414.55px;font-size:14px;color:#1a1a1a;left:285.60px;width:200px;text-align:center;">1</span>
<div class="b" style="left:387.8px;top:220.6px;width:20.4px;height:20.4px;border-radius:50%;box-shadow:0 2.500px 4px 1.200px rgba(0,0,0,.52)"></div>
<svg class="b" style="left:386px;top:218.8px;" width="24" height="24" viewBox="0 0 24 24"><circle cx="12" cy="12" r="10.350" fill="url(#cg)" stroke="#e0161e" stroke-width="2.100"/><circle cx="12" cy="12" r="9.400" fill="none" stroke="#f08a8e" stroke-width=".6"/></svg>
<span class="t" style="top:221.05px;font-size:14px;color:#1a1a1a;left:298.20px;width:200px;text-align:center;">2</span>
<div class="b" style="left:426.5px;top:314.6px;width:20.4px;height:20.4px;border-radius:50%;box-shadow:0 2.500px 4px 1.200px rgba(0,0,0,.52)"></div>
<svg class="b" style="left:424.7px;top:312.8px;" width="24" height="24" viewBox="0 0 24 24"><circle cx="12" cy="12" r="10.350" fill="url(#cg)" stroke="#e0161e" stroke-width="2.100"/><circle cx="12" cy="12" r="9.400" fill="none" stroke="#f08a8e" stroke-width=".6"/></svg>
<span class="t" style="top:315.05px;font-size:14px;color:#1a1a1a;left:336.90px;width:200px;text-align:center;">3</span>
<svg class="b" style="left:453px;top:352px;" width="16" height="24" viewBox="0 0 16 24"><path d="M1.500 1.500V18.500l4-3.800 2.900 6.800 2.600-1.100-2.900-6.700h5.400z" fill="#fff" stroke="#000" stroke-width="1.100" stroke-linejoin="miter"/></svg>
<div class="b" style="left:0px;top:0px;width:670px;height:1px;background:#8c8c8c;"></div>
<div class="b" style="left:0px;top:0px;width:1px;height:451px;background:#6a6a6a;"></div>
<div class="b" style="left:1px;top:0px;width:1px;height:451px;background:rgba(100,100,100,.22);"></div>
</body></html>
